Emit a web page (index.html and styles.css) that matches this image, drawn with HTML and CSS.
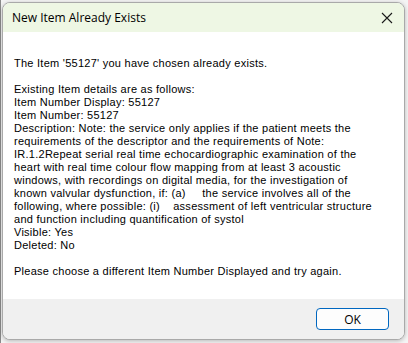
FILE: index.html
```html
<!DOCTYPE html>
<html>
<head>
<meta charset="utf-8">
<link rel="stylesheet" href="styles.css">
</head>
<body>
<div class="desk">
  <div class="dialog">
    <div class="titlebar">
      <span class="title">New Item Already Exists</span>
      <svg class="close" width="12" height="12" viewBox="0 0 12 12"><path d="M1 1 L11 11 M11 1 L1 11" stroke="#1a1a1a" stroke-width="1.1" fill="none"/></svg>
    </div>
    <div class="content">
      <div class="line">The Item '55127' you have chosen already exists.</div>
      <div class="gap"></div>
      <div class="line">Existing Item details are as follows:</div>
      <div class="line">Item Number Display: 55127</div>
      <div class="line">Item Number: 55127</div>
      <div class="line">Description: Note: the service only applies if the patient meets the</div>
      <div class="line">requirements of the descriptor and the requirements of Note:</div>
      <div class="line">IR.1.2Repeat serial real time echocardiographic examination of the</div>
      <div class="line">heart with real time colour flow mapping from at least 3 acoustic</div>
      <div class="line">windows, with recordings on digital media, for the investigation of</div>
      <div class="line">known valvular dysfunction, if: (a)&nbsp;&nbsp;&nbsp;&nbsp; the service involves all of the</div>
      <div class="line">following, where possible: (i)&nbsp;&nbsp;&nbsp; assessment of left ventricular structure</div>
      <div class="line">and function including quantification of systol</div>
      <div class="line">Visible: Yes</div>
      <div class="line">Deleted: No</div>
      <div class="gap"></div>
      <div class="line">Please choose a different Item Number Displayed and try again.</div>
    </div>
    <div class="footer">
      <button class="ok">OK</button>
    </div>
  </div>
</div>
</body>
</html>
```

FILE: styles.css
```css
html, body {
  margin: 0;
  padding: 0;
}
body {
  width: 408px;
  height: 343px;
  overflow: hidden;
  background: #f4f4f4;
  font-family: "Open Sans", "Noto Sans", sans-serif;
}
.desk {
  width: 408px;
  height: 343px;
  box-sizing: border-box;
  padding: 2px 3px 0 2px;
  border-left: 1px solid #8a8a8a;
}
.dialog {
  width: 403px;
  height: 338px;
  box-sizing: border-box;
  border: 1px solid #a9a9a9;
  border-radius: 8px;
  overflow: hidden;
  display: flex;
  flex-direction: column;
  background: #fff;
  box-shadow: 0 1px 4px rgba(0,0,0,0.25);
  margin-left: -1px;
}
.titlebar {
  height: 29px;
  background: #eef7e4;
  display: flex;
  align-items: center;
  justify-content: space-between;
  padding: 0 11px 0 9px;
  flex: none;
}
.title {
  font-size: 12px;
  color: #000;
}
.close {
  display: block;
}
.content {
  flex: 1;
  padding: 25px 0 0 11px;
  font-family: "Liberation Sans", Arial, sans-serif;
  font-size: 11px;
  letter-spacing: 0.26px;
  line-height: 13px;
  color: #000;
}
.line {
  white-space: nowrap;
  height: 13px;
}
.gap {
  height: 13px;
}
.footer {
  height: 40px;
  background: #f0f0f0;
  flex: none;
  display: flex;
  justify-content: flex-end;
  align-items: flex-start;
  padding: 9px 15px 0 0;
  box-sizing: border-box;
}
.ok {
  width: 73px;
  height: 22px;
  border: 1px solid #0067c0;
  border-radius: 4px;
  background: #fdfdfd;
  font-family: "Open Sans", "Noto Sans", sans-serif;
  font-size: 12px;
  color: #000;
  padding: 0;
}
```
